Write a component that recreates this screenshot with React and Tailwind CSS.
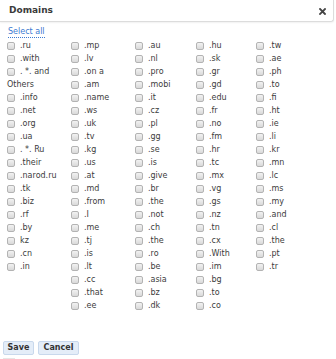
import React from 'react';

const columns = [
    ['.ru', '.with', '. *. and', null, '.info', '.net', '.org', '.ua', '. *. Ru', '.their', '.narod.ru', '.tk', '.biz', '.rf', '.by', 'kz', '.cn', '.in'],
    ['.mp', '.lv', '.on a', '.am', '.name', '.ws', '.uk', '.tv', '.kg', '.us', '.at', '.md', '.from', '.I', '.me', '.tj', '.is', '.lt', '.cc', '.that', '.ee'],
    ['.au', '.nl', '.pro', '.mobi', '.it', '.cz', '.pl', '.gg', '.se', '.is', '.give', '.br', '.the', '.not', '.ch', '.the', '.ro', '.be', '.asia', '.bz', '.dk'],
    ['.hu', '.sk', '.gr', '.gd', '.edu', '.fr', '.no', '.fm', '.hr', '.tc', '.mx', '.vg', '.gs', '.nz', '.tn', '.cx', '.With', '.im', '.bg', '.to', '.co'],
    ['.tw', '.ae', '.ph', '.to', '.fi', '.ht', '.ie', '.li', '.kr', '.mn', '.lc', '.ms', '.my', '.and', '.cl', '.the', '.pt', '.tr'],
];

const Checkbox = () => (
    <span className="w-[8px] h-[8px] shrink-0 rounded-[2px] border border-[#b3b3b3] bg-gradient-to-b from-[#f2f2f2] to-[#d9d9d9]" />
);

const Domain = ({ label }) => {
    if (label === null) {
        // wrapped tail of ". *. and Others"
        return <div className="h-[13px] flex items-center">Others</div>;
    }
    return (
        <div className="h-[13px] flex items-center gap-[5px] whitespace-nowrap">
            <Checkbox />
            <span>{label}</span>
        </div>
    );
};

const App = () => {
    return (
        <div className="w-[336px] h-[359px] bg-white overflow-hidden text-[#333] font-['DejaVu_Sans',sans-serif]">
            <div className="w-[334px] h-[22px] flex items-center justify-between pl-[9px] pr-[7px] border-b border-r border-[#dcdcdc] rounded-br-[3px] shadow-[0_1px_2px_rgba(0,0,0,0.06)]">
                <span className="text-[9px] font-bold text-[#3a3a3a]">Domains</span>
                <svg width="7" height="7" viewBox="0 0 7 7" className="mt-[1px]">
                    <path d="M1 1L6 6M6 1L1 6" stroke="#444" strokeWidth="1.8" strokeLinecap="square" />
                </svg>
            </div>

            <div className="pt-[4px] pl-[7px] text-[8px] leading-[13px]">
                <div className="h-[13px] flex items-center pl-[1px]">
                    <span className="text-[#3d7ad1] border-b border-dotted border-[#3d7ad1] leading-[10px]">Select all</span>
                </div>
                <div className="grid grid-cols-[64px_64px_61px_60px_1fr] text-[#3c3c3c]">
                    {columns.map((col, i) => (
                        <div key={i}>
                            {col.map((label, j) => (
                                <Domain key={j} label={label} />
                            ))}
                        </div>
                    ))}
                </div>
            </div>

            <div className="flex gap-[4px] pl-[3px] mt-[29px]">
                <button className="h-[14px] w-[31px] rounded-[2px] border border-[#c8d8ec] bg-[#e4edf8] text-[8px] font-bold text-[#333] font-['DejaVu_Sans',sans-serif]">
                    Save
                </button>
                <button className="h-[14px] w-[41px] rounded-[2px] border border-[#c8d8ec] bg-[#e4edf8] text-[8px] font-bold text-[#333] font-['DejaVu_Sans',sans-serif]">
                    Cancel
                </button>
            </div>
            <div className="ml-[3px] mt-[3px] w-[12px] h-[2px] bg-[#e6e6e6]" />
        </div>
    );
};

export default App;
